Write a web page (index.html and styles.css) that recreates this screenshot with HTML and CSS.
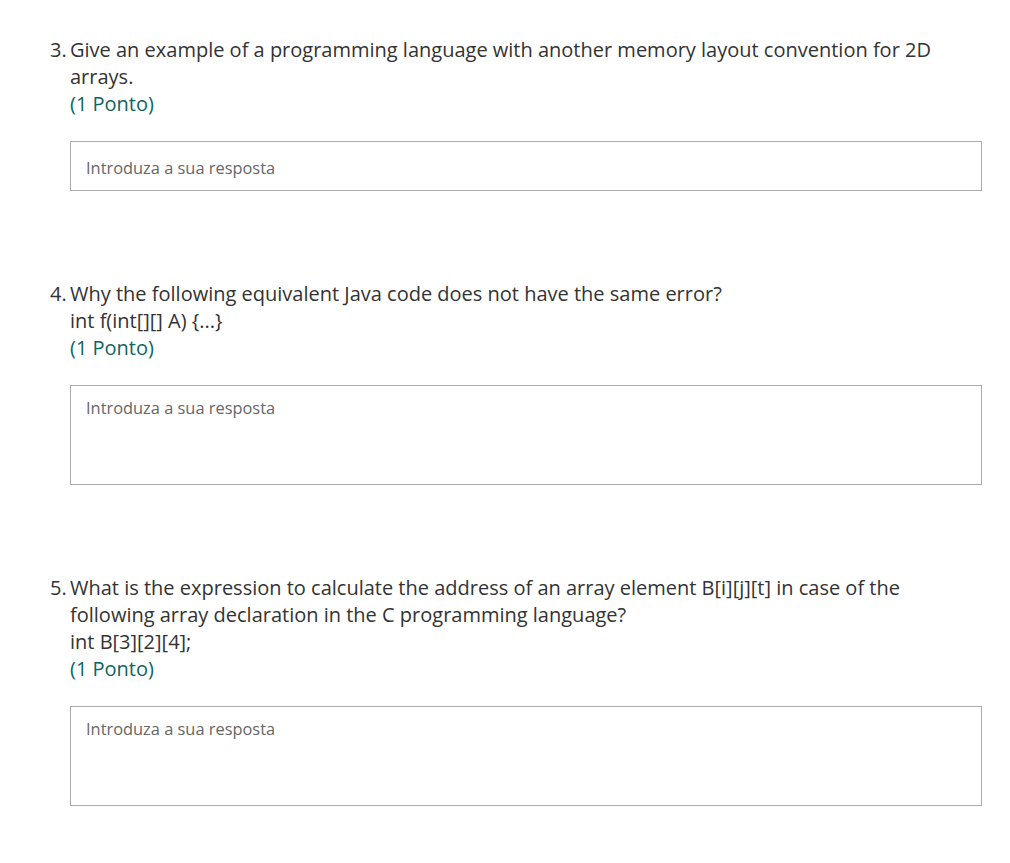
FILE: index.html
```html
<!DOCTYPE html>
<html>
<head>
<meta charset="utf-8">
<link rel="stylesheet" href="styles.css">
</head>
<body>
<div class="form">
  <div class="question">
    <div class="title">
      <span class="num">3.</span>
      <div class="text">
        <div>Give an example of a programming language with another memory layout convention for 2D arrays.</div>
        <div class="points">(1 Ponto)</div>
      </div>
    </div>
    <div class="answer short">Introduza a sua resposta</div>
  </div>
  <div class="question">
    <div class="title">
      <span class="num">4.</span>
      <div class="text">
        <div>Why the following equivalent Java code does not have the same error?</div>
        <div>int f(int[][] A) {...}</div>
        <div class="points">(1 Ponto)</div>
      </div>
    </div>
    <div class="answer tall">Introduza a sua resposta</div>
  </div>
  <div class="question">
    <div class="title">
      <span class="num">5.</span>
      <div class="text">
        <div>What is the expression to calculate the address of an array element B[i][j][t] in case of the following array declaration in the C programming language?</div>
        <div>int B[3][2][4];</div>
        <div class="points">(1 Ponto)</div>
      </div>
    </div>
    <div class="answer tall">Introduza a sua resposta</div>
  </div>
</div>
</body>
</html>
```
FILE: styles.css
```css
html, body {
  margin: 0;
  padding: 0;
  background: #ffffff;
}
body {
  font-family: "Open Sans", "Noto Sans", sans-serif;
  color: #333333;
}
.form {
  padding: 36px 28px 0 50px;
  display: flex;
  flex-direction: column;
  gap: 89px;
}
.title {
  display: flex;
  font-size: 20px;
  line-height: 27px;
}
.num {
  width: 20px;
  flex: none;
}
.text {
  flex: 1;
  padding-right: 30px;
}
.points {
  color: #0e6561;
}
.answer {
  margin: 24px 0 0 20px;
  border: 1px solid #ababab;
  box-sizing: border-box;
  padding: 15px 15px;
  font-size: 16.4px;
  line-height: 20px;
  color: #666666;
}
.answer.short {
  height: 50px;
  padding-top: 16px;
}
.answer.tall {
  height: 100px;
  padding-top: 12px;
}
```
